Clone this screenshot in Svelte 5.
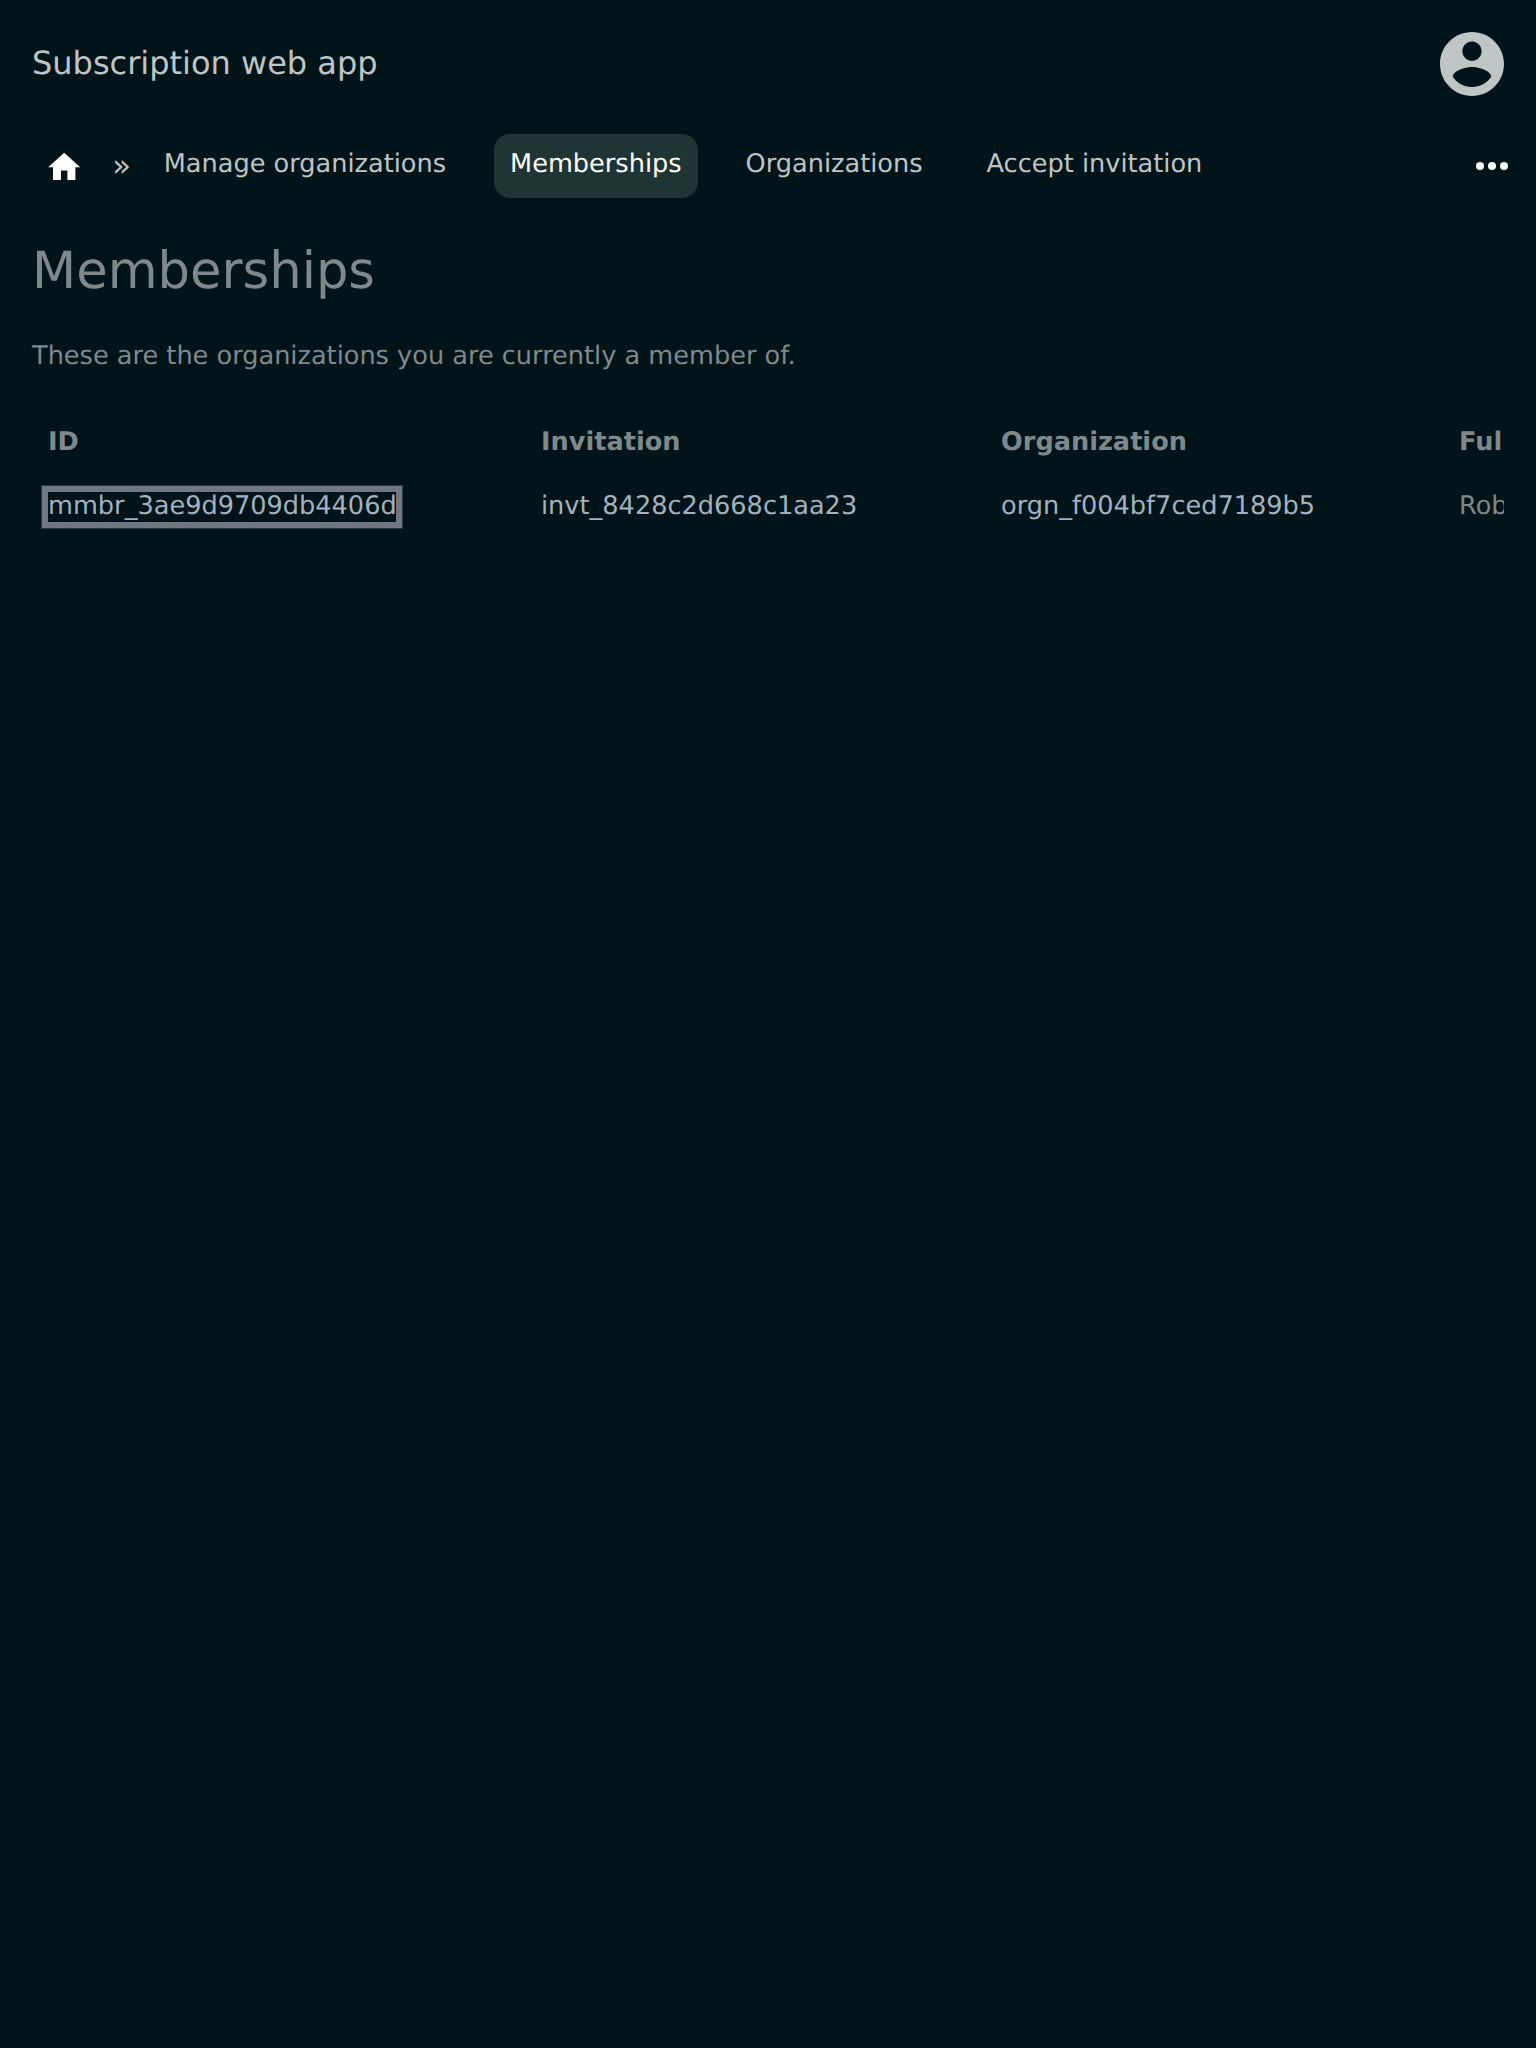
<script>
  const links = [
    { label: 'Manage organizations', active: false },
    { label: 'Memberships', active: true },
    { label: 'Organizations', active: false },
    { label: 'Accept invitation', active: false }
  ];
  const columns = ['ID', 'Invitation', 'Organization', 'Full name'];
</script>

<div class="app">
  <header>
    <span class="brand">Subscription web app</span>
    <svg class="avatar" viewBox="2 2 20 20"><path d="M12 2C6.48 2 2 6.48 2 12s4.48 10 10 10 10-4.48 10-10S17.52 2 12 2zm0 3c1.66 0 3 1.34 3 3s-1.34 3-3 3-3-1.34-3-3 1.34-3 3-3zm0 14.2c-2.5 0-4.71-1.28-6-3.22.03-1.99 4-3.08 6-3.08 1.99 0 5.97 1.09 6 3.08-1.29 1.94-3.5 3.22-6 3.22z" /></svg>
  </header>
  <nav>
    <svg class="home" viewBox="0 0 24 24"><path d="M10 20v-6h4v6h5v-8h3L12 3 2 12h3v8z" /></svg>
    <span class="sep">»</span>
    <div class="links">
      {#each links as link}
        <span class="link" class:active={link.active}>{link.label}</span>
      {/each}
    </div>
    <svg class="more" viewBox="0 0 24 24"><circle cx="6" cy="12" r="2" /><circle cx="12" cy="12" r="2" /><circle cx="18" cy="12" r="2" /></svg>
  </nav>
  <main>
    <h1>Memberships</h1>
    <p>These are the organizations you are currently a member of.</p>
    <div class="scroller">
      <div class="table">
        {#each columns as column}
          <strong>{column}</strong>
        {/each}
        <span class="id"><span class="focused">mmbr_3ae9d9709db4406d</span></span>
        <span class="id">invt_8428c2d668c1aa23</span>
        <span class="id">orgn_f004bf7ced7189b5</span>
        <span>Robin</span>
      </div>
    </div>
  </main>
</div>

<style>
  :global(body) {
    background: #001419;
  }
  .app {
    min-height: 2048px;
    box-sizing: border-box;
    overflow: hidden;
    color: #7f898b;
    font: 25.6px/32px 'DejaVu Sans', sans-serif;
    text-rendering: geometricPrecision;
  }
  header {
    display: flex;
    justify-content: space-between;
    align-items: center;
    padding: 32px 32px 0;
    height: 64px;
    color: #bfc4c5;
  }
  .brand {
    font-size: 32px;
    line-height: 40px;
    margin-bottom: 2px;
  }
  .avatar {
    width: 64px;
    height: 64px;
    fill: #bfc4c5;
  }
  nav {
    display: flex;
    align-items: center;
    height: 64px;
    margin-top: 38px;
    padding: 0 20px 0 44.8px;
    color: #bfc4c5;
  }
  .home {
    width: 38.4px;
    height: 38.4px;
    fill: #fff;
    margin-top: 2px;
  }
  .sep {
    margin: 0 16.8px 0 29px;
    font-size: 30.72px;
  }
  .links {
    display: flex;
    flex: 1;
    gap: 32px;
  }
  .link {
    height: 64px;
    box-sizing: border-box;
    padding: 14px 16px;
    border-radius: 16px;
    white-space: nowrap;
  }
  .active {
    background: #1e3534;
    color: #fff;
  }
  .more {
    width: 48px;
    height: 48px;
    fill: #fff;
  }
  main {
    padding: 0 32px;
  }
  h1 {
    margin: 41px 0 0;
    font-size: 51.2px;
    line-height: 64px;
    font-weight: 400;
  }
  p {
    margin: 37px 0 0;
  }
  .scroller {
    margin-top: 38px;
    overflow: hidden;
  }
  .table {
    display: grid;
    grid-template-columns: 493px 460px 458px 400px;
    grid-auto-rows: 64px;
    width: max-content;
    padding-left: 16px;
    line-height: 64px;
  }
  .id {
    color: #a4b1be;
  }
  .focused {
    display: inline-block;
    width: 348px;
    padding-bottom: 2px;
    line-height: 28px;
    white-space: nowrap;
    outline: 6px solid #6f7780;
    box-shadow: 0 0 0 7px #2b383f;
  }
</style>
